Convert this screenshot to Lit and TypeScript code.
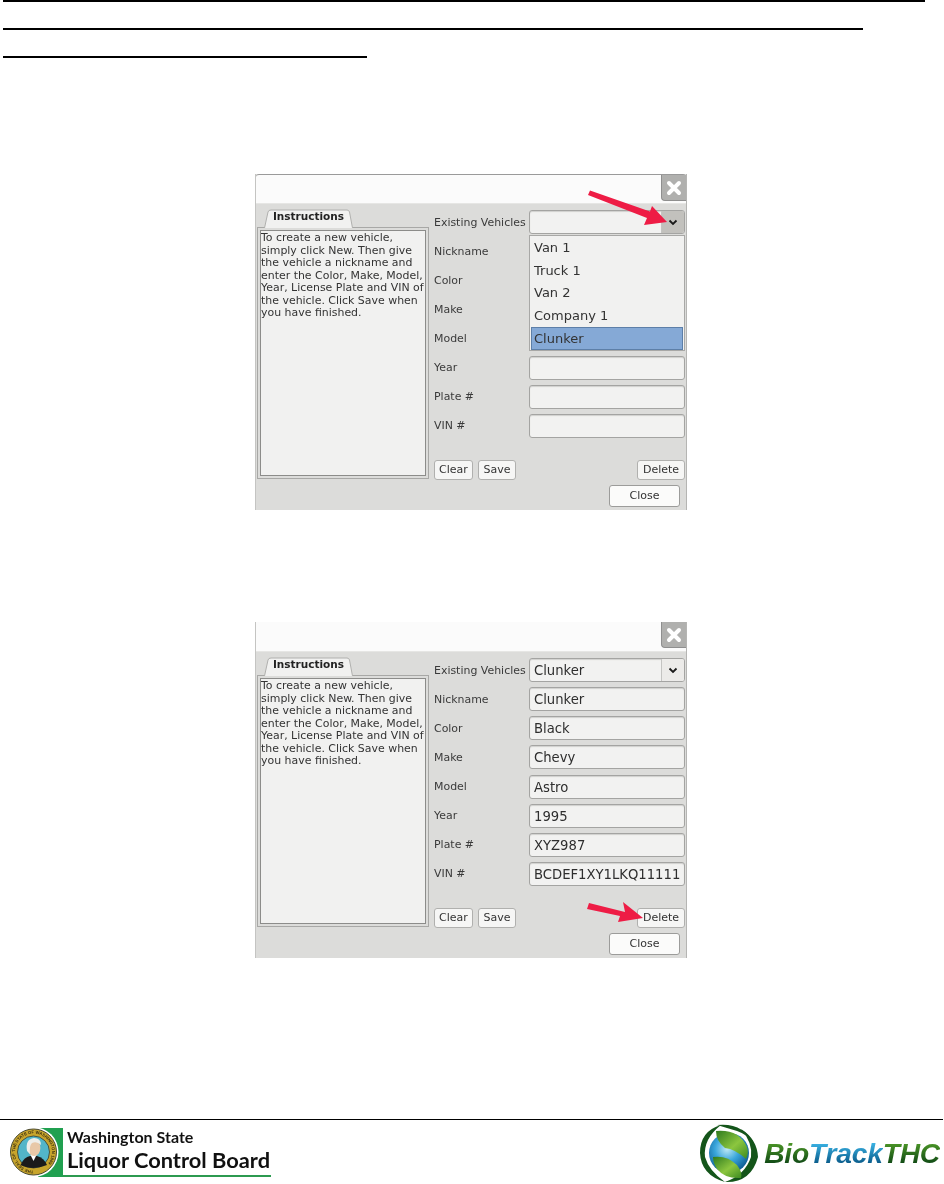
import { LitElement, html, css, svg, nothing } from "lit";
import { customElement, property } from "lit/decorators.js";

const LABELS = ["Existing Vehicles", "Nickname", "Color", "Make", "Model", "Year", "Plate #", "VIN #"];

@customElement("vehicle-dialog")
class VehicleDialog extends LitElement {
  @property({ type: Array }) values: string[] = [];
  @property({ type: Boolean }) open = false;

  static styles = css`
    :host { display: block; width: 432px; height: 336px; position: relative; font-family: "DejaVu Sans", sans-serif; color: #333; }
    .win { height: 336px; display: flex; flex-direction: column; filter: blur(0.3px); box-sizing: border-box; border-left: 1px solid #c4c4c2; border-right: 1px solid #b5b5b3; background: #dcdcda; }
    .title { height: 30px; flex: none; background: #fbfbfb; display: flex; justify-content: flex-end; align-items: flex-start; box-sizing: border-box; border-bottom: 1px solid #e6e6e4; }
    .top .title { border-top: 1px solid #9a9a9a; border-radius: 3px 3px 0 0; }
    .x { width: 25px; height: 26px; background: #b0b0ae; border-radius: 0 0 0 4px; border-left: 1px solid #8f8f8f; border-bottom: 1px solid #8f8f8f; box-sizing: border-box; display: flex; align-items: center; justify-content: center; }
    .main { display: flex; flex: none; height: 276px; }
    .left { width: 172px; margin-left: 1px; padding-top: 5px; flex: none; display: flex; flex-direction: column; }
    .tab { position: relative; margin-left: 7px; width: 89px; height: 19px; box-sizing: border-box; padding-bottom: 5px; margin-bottom: -1px; z-index: 1; font-size: 10.5px; font-weight: 700; display: flex; align-items: center; justify-content: center; color: #222; }
    .tab svg { position: absolute; inset: 0; }
    .tab span { position: relative; }
    .panel { height: 252px; box-sizing: border-box; border: 1px solid #a8a8a6; padding: 2px; background: #dcdcda; }
    .text { height: 100%; box-sizing: border-box; border: 1px solid #8c8c8a; background: #f1f1f0; font-size: 10.95px; line-height: 12.55px; padding: 1px 0 0 0; white-space: nowrap; overflow: hidden; }
    .right { margin-left: 5px; width: 251px; flex: none; padding-top: 6px; display: flex; flex-direction: column; position: relative; }
    .form { display: grid; grid-template-columns: 95px 156px; grid-auto-rows: 24px; row-gap: 5.15px; align-items: center; }
    .lbl { font-size: 10.95px; white-space: nowrap; color: #3a3a3a; }
    .field { height: 24px; box-sizing: border-box; border: 1px solid #a4a4a2; border-radius: 3px; background: #f2f2f1; box-shadow: inset 0 1px 1px #d0d0ce; font-size: 13.2px; line-height: 24px; padding-left: 4px; white-space: nowrap; overflow: hidden; color: #2e2e2e; display: flex; }
    .val { flex: 1; }
    .drop { width: 22px; flex: none; margin-left: auto; border-left: 1px solid #c4c4c2; display: flex; align-items: center; justify-content: center; background: #ecebe9; }
    .drop.on { background: #c2c1bd; }
    .list { position: absolute; left: 95px; top: 31px; width: 156px; height: 116px; box-sizing: border-box; border: 1px solid #a8a8a6; background: #f1f1f0; padding: 1px; font-size: 13px; z-index: 2; }
    .item { height: 22.5px; line-height: 22px; padding-left: 3px; color: #333; box-sizing: border-box; }
    .item.sel { height: 23px; background: #85a9d6; border: 1px solid #5d7fa8; padding-left: 2px; line-height: 21px; }
    .btns { display: flex; gap: 5px; margin-top: 22px; }
    .btn { height: 20px; box-sizing: border-box; border: 1px solid #b0b0ae; border-radius: 3px; background: #f6f6f5; font-size: 11px; line-height: 18px; text-align: center; color: #333; }
    .clear { width: 39px; } .save { width: 38px; } .del { width: 48px; margin-left: auto; }
    .foot { display: flex; justify-content: flex-end; padding: 5px 6px 0 0; }
    .close { width: 71px; height: 22px; line-height: 20px; background: #fbfbfa; border-color: #9c9c9a; }
    .arrow { position: absolute; inset: 0; pointer-events: none; z-index: 3; }
  `;

  render() {
    const v = this.values;
    return html`
      <div class="win ${this.open ? "top" : ""}">
        <div class="title">
          <div class="x">
            <svg width="16" height="16" viewBox="0 0 16 16"><path d="M3 3 L13 13 M13 3 L3 13" stroke="#fff" stroke-width="4" stroke-linecap="round"/></svg>
          </div>
        </div>
        <div class="main">
          <div class="left">
            <div class="tab">
              <svg width="89" height="19" viewBox="0 0 89 19"><path d="M0.5 19 L4 3 Q4.5 1 7 1 L83 1 Q85 1 85.5 3 L88.5 19" fill="#f1f1f0" stroke="#b0b0ae"/></svg>
              <span>Instructions</span>
            </div>
            <div class="panel">
              <div class="text">To create a new vehicle,<br>simply click New. Then give<br>the vehicle a nickname and<br>enter the Color, Make, Model,<br>Year, License Plate and VIN of<br>the vehicle. Click Save when<br>you have finished.</div>
            </div>
          </div>
          <div class="right">
            <div class="form">
              ${LABELS.map((l, i) => html`
                <div class="lbl">${l}</div>
                <div class="field">
                  <span class="val">${v[i] ?? ""}</span>
                  ${i === 0 ? html`<span class="drop ${this.open ? "on" : ""}"><svg width="10" height="7" viewBox="0 0 10 7"><path d="M1.5 1.5 L5 5 L8.5 1.5" fill="none" stroke="#1a1a1a" stroke-width="1.8"/></svg></span>` : nothing}
                </div>`)}
            </div>
            ${this.open ? html`<div class="list">
              <div class="item">Van 1</div><div class="item">Truck 1</div><div class="item">Van 2</div><div class="item">Company 1</div><div class="item sel">Clunker</div>
            </div>` : nothing}
            <div class="btns">
              <div class="btn clear">Clear</div><div class="btn save">Save</div><div class="btn del">Delete</div>
            </div>
          </div>
        </div>
        <div class="foot"><div class="btn close">Close</div></div>
      </div>
      <svg class="arrow" width="432" height="336" viewBox="0 0 432 336">
        ${this.open
          ? svg`<polygon points="335,16.5 395,37.5 397,32 412,48 389,51 392,44 333,21" fill="#ee1c45"/>`
          : svg`<polygon points="334,281 370,290 368,280 388,296 363,300 365,294 332,287" fill="#ee1c45"/>`}
      </svg>
    `;
  }
}

@customElement("wa-logo")
class WaLogo extends LitElement {
  static styles = css`
    :host { display: flex; width: 261px; height: 50px; filter: blur(0.35px); }
    svg { flex: none; }
    .t { flex: 1; min-width: 0; border-bottom: 2px solid #2c9a50; padding-left: 4px; color: #111; font-family: "Lato", sans-serif; font-weight: 700; white-space: nowrap; }
    .a { font-size: 16px; line-height: 20px; height: 20px; }
    .b { font-size: 21.8px; line-height: 26px; height: 26px; }
  `;
  render() {
    return html`
      <svg width="53" height="50" viewBox="0 0 53 50">
        <rect x="28" y="1" width="25" height="49" fill="#20a050"/>
        <circle cx="23.5" cy="25" r="25" fill="#fff"/>
        <circle cx="23.5" cy="25" r="23" fill="#c8a52c" stroke="#4a4a30" stroke-width="1"/>
        <circle cx="23.5" cy="25" r="16" fill="#52b5c8" stroke="#3a3a28" stroke-width="0.8"/>
        <defs><path id="ring" d="M23.5 43.5 a18.5 18.5 0 1 1 0.01 0"/></defs>
        <text font-size="4.2" font-family="Liberation Sans, sans-serif" font-weight="700" fill="#3a2f10"><textPath href="#ring">THE SEAL OF THE STATE OF WASHINGTON 1889</textPath></text>
        <path d="M10.5 38 Q14 30 20 29 L27 29 Q34 31 37 38 Q30 41 23.5 41 Q16 41 10.5 38 Z" fill="#1b1b1b"/>
        <path d="M20.5 28 L23.5 34 L26.5 28 Z" fill="#fff"/>
        <ellipse cx="24" cy="21" rx="6.4" ry="8" fill="#e8c8a8"/>
        <path d="M17 24 Q15 12 24 11 Q31 11 31 18 Q27 14 22 16 Q19 19 20 27 Z" fill="#eeeeea"/>
      </svg>
      <div class="t"><div class="a">Washington State</div><div class="b">Liquor Control Board</div></div>
    `;
  }
}

@customElement("bio-logo")
class BioLogo extends LitElement {
  static styles = css`
    :host { display: flex; align-items: center; gap: 5px; height: 60px; filter: blur(0.3px); }
    svg { flex: none; }
    .t { font-family: "Liberation Sans", sans-serif; font-weight: 700; font-style: italic; font-size: 28.2px; letter-spacing: -0.2px; line-height: 30px; white-space: nowrap; }
    .g, .k { -webkit-background-clip: text; background-clip: text; color: transparent; }
    .g { background-image: linear-gradient(#4f9a28 15%, #134d16 80%); }
    .k { background-image: linear-gradient(#3db8ea 15%, #0c5f8e 80%); }
  `;
  render() {
    return html`
      <svg width="60" height="60" viewBox="0 0 60 60">
        <defs>
          <radialGradient id="sea" cx="45%" cy="40%" r="60%"><stop offset="0" stop-color="#bfe9f5"/><stop offset=".5" stop-color="#3aa6dc"/><stop offset="1" stop-color="#0f5f96"/></radialGradient>
          <linearGradient id="leaf" x1="0" y1="0" x2="1" y2="1"><stop offset="0" stop-color="#2e7a1e"/><stop offset=".55" stop-color="#8cc63f"/><stop offset="1" stop-color="#3c8a20"/></linearGradient>
        </defs>
        <circle cx="30" cy="30" r="29.5" fill="#fff"/>
        <path d="M22 2 Q1 8 1 30 Q2 52 26 59 Q10 48 6 34 Q4 16 22 2 Z" fill="#14551a"/>
        <path d="M26 59 Q52 60 59 34 Q58 16 42 6 Q54 20 52 34 Q46 52 26 59 Z" fill="#14551a"/>
        <path d="M18 2 Q44 -1 56 22 Q50 12 38 8 Q28 5 18 2 Z" fill="#14551a"/>
        <circle cx="30" cy="30" r="20" fill="url(#sea)"/>
        <path d="M17 8 Q40 6 48 24 Q50 30 47 36 Q36 26 26 25 Q17 18 17 8 Z" fill="url(#leaf)"/>
        <path d="M14 34 Q28 32 38 42 Q44 50 42 55 Q26 56 18 46 Q14 40 14 34 Z" fill="url(#leaf)"/>
      </svg>
      <div class="t"><span class="g">Bio</span><span class="k">Track</span><span class="g">THC</span></div>
    `;
  }
}

@customElement("app-root")
class AppRoot extends LitElement {
  static styles = css`
    :host { display: flex; flex-direction: column; width: 944px; height: 1184px; background: #fff; overflow: hidden; }
    .rule { height: 2px; background: #000; margin-left: 3px; flex: none; }
    .r1 { width: 922px; }
    .r2 { width: 860px; margin-top: 26px; }
    .r3 { width: 364px; margin-top: 26px; }
    .d { margin-left: 255px; flex: none; }
    .d1 { margin-top: 116px; }
    .d2 { margin-top: 112px; }
    .footer { margin-top: auto; border-top: 1px solid #000; height: 65px; box-sizing: border-box; width: 943px; display: flex; justify-content: space-between; align-items: flex-start; flex: none; }
    .fl { margin: 7px 0 0 10px; }
    .fr { margin: 3px 3px 0 0; }
  `;
  render() {
    return html`
      <div class="rule r1"></div>
      <div class="rule r2"></div>
      <div class="rule r3"></div>
      <vehicle-dialog class="d d1" .open=${true}></vehicle-dialog>
      <vehicle-dialog class="d d2" .values=${["Clunker", "Clunker", "Black", "Chevy", "Astro", "1995", "XYZ987", "BCDEF1XY1LKQ11111"]}></vehicle-dialog>
      <div class="footer">
        <wa-logo class="fl"></wa-logo>
        <bio-logo class="fr"></bio-logo>
      </div>
    `;
  }
}
